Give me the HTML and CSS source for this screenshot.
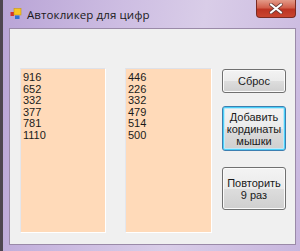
FILE: index.html
```html
<!DOCTYPE html>
<html lang="ru">
<head>
  <meta charset="UTF-8">
  <title>Автокликер для цифр</title>
  <link rel="stylesheet" href="styles.css">
</head>
<body>
  <div class="window">
    <div class="titlebar">
      <svg class="app-icon" width="12" height="12" viewBox="0 0 12 12">
        <rect x="0.5" y="4" width="3.5" height="4" fill="#d2342c"/>
        <rect x="4" y="0.5" width="7" height="6.5" fill="#f6c624" stroke="#c99a10" stroke-width="0.6"/>
        <rect x="5" y="7.5" width="4.5" height="3.5" fill="#2f6fd0"/>
      </svg>
      <span class="title">Автокликер для цифр</span>
      <div class="close">
        <svg width="14" height="11" viewBox="0 0 14 11">
          <path d="M2 1.5 L12 9.5 M12 1.5 L2 9.5" stroke="#6a3a36" stroke-width="3.6" stroke-linecap="round"/>
          <path d="M2 1.5 L12 9.5 M12 1.5 L2 9.5" stroke="#ffffff" stroke-width="2.2" stroke-linecap="round"/>
        </svg>
      </div>
    </div>
    <div class="client">
      <div class="list">916<br>652<br>332<br>377<br>781<br>1110</div>
      <div class="list list-second">446<br>226<br>332<br>479<br>514<br>500</div>
      <div class="buttons">
        <button class="btn btn-reset">Сброс</button>
        <button class="btn btn-add focused">Добавить кординаты мышки</button>
        <button class="btn btn-repeat">Повторить 9 раз</button>
      </div>
    </div>
  </div>
</body>
</html>
```

FILE: styles.css
```css
body {
  margin: 0;
  font-family: "Liberation Sans", Arial, sans-serif;
  background: #ffffff;
}
.window {
  width: 300px;
  height: 251px;
  box-sizing: border-box;
  padding: 0 4px 6px 6px;
  border-left: 3px solid #4e4650;
  background: linear-gradient(100deg, #b9a4d6 0%, #cdbde2 35%, #d9cde8 60%, #c8b6de 100%);
  display: flex;
  flex-direction: column;
}
.titlebar {
  height: 28px;
  display: flex;
  align-items: flex-start;
  position: relative;
}
.app-icon {
  margin: 8px 0 0 1px;
}
.title {
  margin: 7px 0 0 5px;
  font-family: "Open Sans", "Noto Sans", sans-serif;
  font-size: 11.5px;
  color: #1a1a1a;
  letter-spacing: 0.1px;
}
.close {
  position: absolute;
  top: 0;
  right: 0;
  width: 40px;
  height: 18px;
  box-sizing: border-box;
  border: 1px solid #7a2b22;
  border-top: none;
  border-radius: 0 0 4px 4px;
  background: linear-gradient(#e39a88 0%, #d2604c 45%, #bd3423 55%, #c9452f 100%);
  display: flex;
  align-items: center;
  justify-content: center;
}
.client {
  flex: 1;
  background: #f0f0f0;
  border: 1px solid #9a8aa8;
  display: flex;
  align-items: flex-start;
  padding: 39px 0 0 10px;
}
.list {
  width: 86px;
  height: 165px;
  box-sizing: border-box;
  background: #ffdab9;
  border: 1px solid #ffffff;
  border-top-color: #dfe1e8;
  border-left-color: #e4e6ec;
  padding: 3px 2px;
  font-size: 11px;
  line-height: 11.5px;
  color: #1a1a1a;
}
.list-second {
  margin-left: 19px;
  width: 87px;
}
.buttons {
  margin-left: 10px;
  width: 64px;
  display: flex;
  flex-direction: column;
}
.btn {
  width: 64px;
  box-sizing: border-box;
  border: 1px solid #707070;
  border-radius: 3px;
  background: linear-gradient(#f3f3f3 0%, #ebebeb 50%, #dddddd 51%, #cfcfcf 100%);
  box-shadow: inset 0 0 0 1px #fbfbfb;
  font-family: "Liberation Sans", Arial, sans-serif;
  font-size: 11px;
  line-height: 12px;
  color: #1a1a1a;
  padding: 0 2px;
}
.btn-reset {
  margin-top: 1px;
  height: 24px;
}
.btn-add {
  margin-top: 13px;
  height: 45px;
}
.btn-repeat {
  margin-top: 16px;
  height: 43px;
}
.focused {
  border-color: #3c7fb1;
  box-shadow: inset 0 0 0 1px #4ad0f8, inset 0 0 0 2px #bfe8f8;
}
```
